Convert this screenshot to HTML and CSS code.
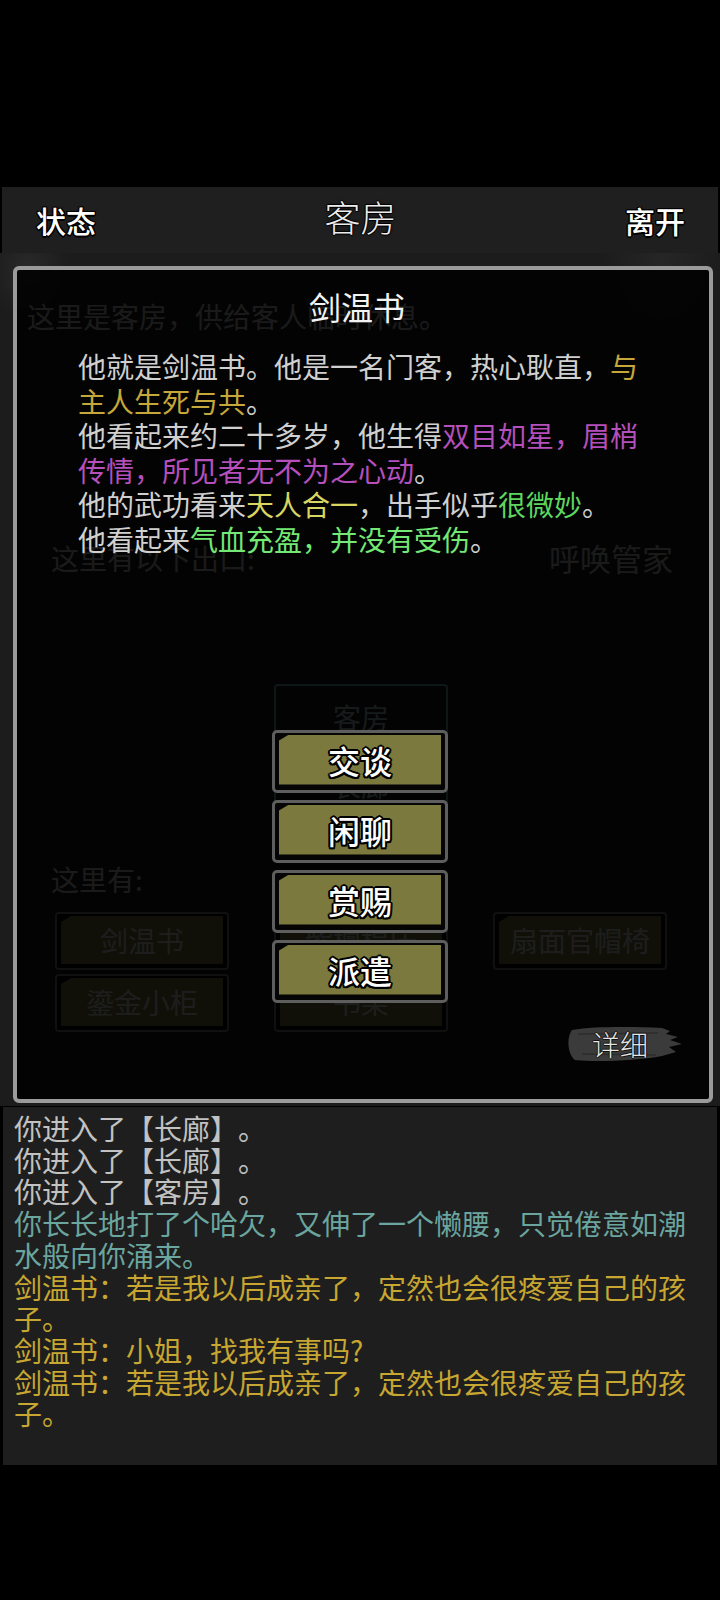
FILE: index.html
```html
<!DOCTYPE html>
<html lang="zh">
<head>
    <meta charset="UTF-8">
    <meta name="viewport" content="width=device-width, initial-scale=1.0">
    <title>客房</title>
    <link rel="stylesheet" href="styles.css">
</head>
<body>
    <div class="top-space"></div>

    <header class="topbar">
        <span class="topbar-btn">状态</span>
        <span class="topbar-title">客房</span>
        <span class="topbar-btn">离开</span>
    </header>

    <main class="scene">
        <p class="room-desc">这里是客房，供给客人临时休息。</p>
        <div class="exits-head">
            <span>这里有以下出口:</span>
            <span class="call">呼唤管家</span>
        </div>
        <div class="grid exits">
            <div class="exit">客房</div>
            <div class="exit">长廊</div>
        </div>
        <p class="label">这里有:</p>
        <div class="grid objects">
            <div class="obj"><span>剑温书</span></div>
            <div class="obj"><span>紫檀榻床</span></div>
            <div class="obj"><span>扇面官帽椅</span></div>
            <div class="obj"><span>鎏金小柜</span></div>
            <div class="obj"><span>书架</span></div>
        </div>

        <!-- npc popup -->
        <div class="dialog">
            <div class="dialog-title">剑温书</div>
            <div class="dialog-desc">
                <p>他就是剑温书。他是一名门客，热心耿直，<span class="c-gold">与主人生死与共</span>。</p>
                <p>他看起来约二十多岁，他生得<span class="c-purple">双目如星，眉梢传情，所见者无不为之心动</span>。</p>
                <p>他的武功看来<span class="c-yellow">天人合一</span>，出手似乎<span class="c-green">很微妙</span>。</p>
                <p>他看起来<span class="c-lime">气血充盈，并没有受伤</span>。</p>
            </div>
            <div class="actions">
                <div class="act"><span>交谈</span></div>
                <div class="act"><span>闲聊</span></div>
                <div class="act"><span>赏赐</span></div>
                <div class="act"><span>派遣</span></div>
            </div>
            <div class="detail">
                <svg class="detail-bg" viewBox="0 0 116 38" width="116" height="38">
                    <path d="M6 5 C30 1 70 2 96 3 L104 6 L100 9 L112 12 L104 15 L116 19 L103 22 L110 27 L96 31 C70 36 30 37 9 35 C2 30 0 13 6 5 Z" fill="#3b3b3b"/>
                    <path d="M12 9 L92 8 M16 29 L90 30" stroke="#2d2d2d" stroke-width="1.5"/>
                </svg>
                <span class="detail-text">详细</span>
            </div>
        </div>
    </main>

    <section class="log">
        <p class="l-gray">你进入了【长廊】。</p>
        <p class="l-gray">你进入了【长廊】。</p>
        <p class="l-gray">你进入了【客房】。</p>
        <p class="l-teal">你长长地打了个哈欠，又伸了一个懒腰，只觉倦意如潮水般向你涌来。</p>
        <p class="l-gold">剑温书：若是我以后成亲了，定然也会很疼爱自己的孩子。</p>
        <p class="l-gold">剑温书：小姐，找我有事吗?</p>
        <p class="l-gold">剑温书：若是我以后成亲了，定然也会很疼爱自己的孩子。</p>
    </section>
</body>
</html>
```

FILE: styles.css
```css
body {
    margin: 0;
    background-color: #000;
    font-family: "Noto Sans CJK SC", "Noto Sans", sans-serif;
    color: #c8c8c8;
    text-spacing-trim: space-all;
}
p {
    margin: 0;
}
.top-space {
    height: 187px;
}

/* top bar */
.topbar {
    height: 66px;
    margin: 0 2px;
    padding: 0 33px 0 34px;
    background-color: #1f1f1f;
    display: flex;
    align-items: center;
    justify-content: space-between;
}
.topbar-btn {
    font-size: 30px;
    font-weight: 500;
    line-height: 1;
    color: #fff;
    text-shadow: -1.5px 0 #000, 1.5px 0 #000, 0 -1.5px #000, 0 1.5px #000,
                 -1px -1px #000, 1px -1px #000, -1px 1px #000, 1px 1px #000;
}
.topbar-title {
    font-size: 36px;
    font-weight: 300;
    line-height: 1;
    color: #ececec;
    margin-bottom: 8px;
    text-shadow: -1px 0 #000, 1px 0 #000, 0 -1px #000, 0 1px #000, 0 0 3px #000;
}

/* room scene under the popup */
.scene {
    position: relative;
    height: 853px;
    background-color: #1c1c1c;
    background-image: radial-gradient(ellipse at 4% 2%, #2a2a2a 0, transparent 40px),
                      radial-gradient(ellipse at 92% 1%, #262626 0, transparent 60px);
    overflow: hidden;
    font-size: 28px;
    line-height: 34px;
}
.room-desc {
    padding: 46px 0 0 27px;
}
.exits-head {
    display: flex;
    justify-content: space-between;
    align-items: center;
    margin-top: 208px;
    padding: 0 47px 0 51px;
}
.call {
    font-size: 31px;
}
.grid {
    display: grid;
    grid-template-columns: repeat(3, 174px);
    column-gap: 45px;
    margin-left: 55px;
}
.exits {
    margin-top: 109px;
    row-gap: 2px;
}
.exit {
    grid-column: 2;
    height: 66px;
    box-sizing: border-box;
    border: 2px solid #6fb0b0;
    border-radius: 4px;
    display: flex;
    align-items: center;
    justify-content: center;
    color: #a8c4c4;
}
.label {
    margin: 44px 0 0 51px;
}
.objects {
    margin-top: 16px;
    row-gap: 4px;
}
.obj {
    height: 58px;
    box-sizing: border-box;
    border: 2px solid #7a7a7a;
    border-radius: 4px;
    padding: 2px 4px 4px;
    background-color: #000;
}
.obj span {
    height: 100%;
    display: flex;
    align-items: center;
    justify-content: center;
    background-color: #7b793d;
    clip-path: polygon(10px 0, 100% 0, 100% 100%, 0 100%, 0 6px);
    color: #e0e0e0;
}

/* popup */
.dialog {
    position: absolute;
    top: 13px;
    left: 13px;
    width: 700px;
    height: 837px;
    box-sizing: border-box;
    border: 4px solid #9b9b9b;
    border-radius: 6px;
    background-color: rgba(0, 0, 0, 0.87);
    padding-top: 16px;
    display: flex;
    flex-direction: column;
}
.dialog-title {
    font-size: 32px;
    line-height: 40px;
    color: #f2f2f2;
    text-align: center;
    padding-right: 12px;
}
.dialog-desc {
    margin-top: 23px;
    padding: 0 61px;
    font-size: 28px;
    line-height: 34.6px;
    color: #d0d0d0;
}
.c-gold { color: #c6a83a; }
.c-purple { color: #b44fbb; }
.c-yellow { color: #d8d660; }
.c-green { color: #5ed65e; }
.c-lime { color: #74e874; }

.actions {
    margin-top: 173px;
    margin-right: 6px;
    align-self: center;
    width: 176px;
    display: flex;
    flex-direction: column;
    gap: 7px;
}
.act {
    height: 63px;
    box-sizing: border-box;
    border: 3px solid #5e5e5e;
    border-radius: 5px;
    padding: 2px 4px 5px;
    background-color: #050505;
}
.act span {
    height: 100%;
    display: flex;
    align-items: center;
    justify-content: center;
    background-color: #7b793d;
    clip-path: polygon(10px 0, 100% 0, 100% 100%, 0 100%, 0 6px);
    font-size: 32px;
    font-weight: 500;
    color: #fff;
    text-shadow: -2px 0 #000, 2px 0 #000, 0 -2px #000, 0 2px #000,
                 -1.5px -1.5px #000, 1.5px -1.5px #000, -1.5px 1.5px #000, 1.5px 1.5px #000;
}

.detail {
    position: relative;
    align-self: flex-end;
    margin: 22px 27px 0 0;
    width: 116px;
    height: 38px;
    display: flex;
    align-items: center;
    justify-content: center;
}
.detail-bg {
    position: absolute;
    top: 0;
    left: 0;
}
.detail-text {
    position: relative;
    padding-right: 8px;
    font-size: 28px;
    font-weight: 300;
    line-height: 1;
    color: #e4e4e4;
    text-shadow: -1px 0 #111, 1px 0 #111, 0 -1px #111, 0 1px #111;
}

/* message log */
.log {
    margin: 1px 3px 0;
    padding: 6px 11px 35px;
    background-color: #1e1e1e;
    font-size: 28px;
    line-height: 31.7px;
}
.l-gray { color: #c2c2c2; }
.l-teal { color: #6ba59f; }
.l-gold { color: #c7a631; }
```
